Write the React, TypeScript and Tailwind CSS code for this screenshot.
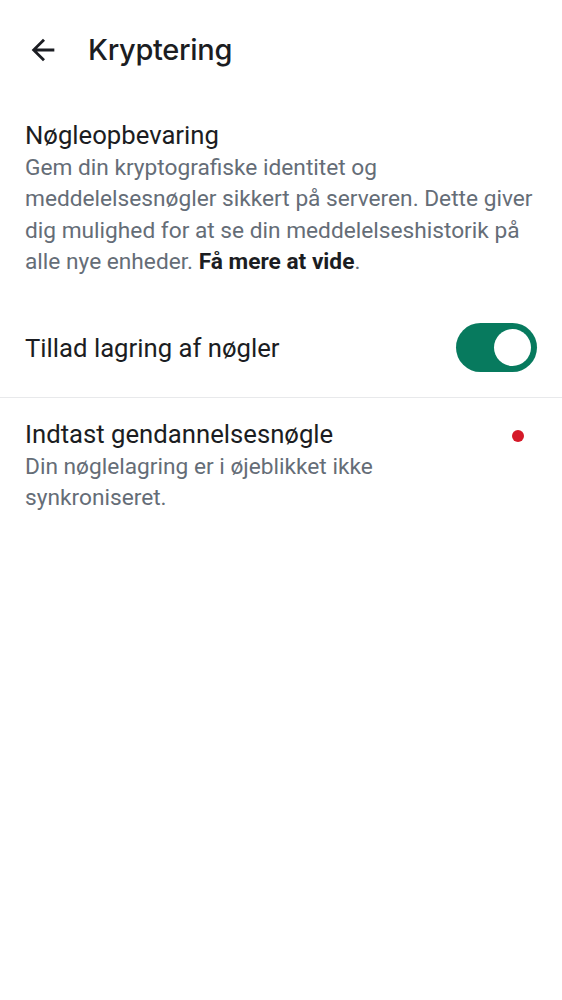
import React from 'react';

const ArrowBack = () => (
  <svg width="34" height="34" viewBox="0 0 24 24" fill="#1b1d22">
    <path d="M20 11H7.83l5.59-5.59L12 4l-8 8 8 8 1.41-1.41L7.83 13H20v-2z" />
  </svg>
);

const App = () => {
  return (
    <div className="w-full min-h-screen bg-white font-['Roboto',sans-serif] text-[#1b1d22]">
      {/* Top bar */}
      <div className="h-[100px] flex items-center pl-[26px]">
        <ArrowBack />
        <h1 className="ml-[28px] font-['Inter',sans-serif] font-medium text-[29px] tracking-[-0.3px]">
          Kryptering
        </h1>
      </div>

      {/* Key storage */}
      <div className="px-[25px] pt-[19px]">
        <p className="text-[25.7px] leading-[32px]">Nøgleopbevaring</p>
        <p className="mt-[1px] text-[22.7px] leading-[31.3px] text-[#656d77]">
          Gem din kryptografiske identitet og meddelelsesnøgler sikkert på serveren. Dette giver dig mulighed for at
          se din meddelelseshistorik på alle nye enheder.{' '}
          <span className="font-bold text-[#1b1d22]">Få mere at vide</span>.
        </p>
      </div>

      <div className="flex items-center justify-between px-[25px] pt-[46px] pb-[25px]">
        <p className="text-[25.7px] leading-[32px]">Tillad lagring af nøgler</p>
        <div className="w-[81px] h-[49px] rounded-full bg-[#077a5e] flex items-center justify-end pr-[6px]">
          <div className="w-[37px] h-[37px] rounded-full bg-white" />
        </div>
      </div>

      <div className="h-px bg-[#e8e9eb]" />

      {/* Recovery key */}
      <div className="flex items-start justify-between px-[25px] pt-[20px]">
        <div className="max-w-[440px]">
          <p className="text-[25.7px] leading-[32px]">Indtast gendannelsesnøgle</p>
          <p className="mt-[1px] text-[22.7px] leading-[31.3px] text-[#656d77]">
            Din nøglelagring er i øjeblikket ikke synkroniseret.
          </p>
        </div>
        <div className="mt-[12px] mr-[13px] w-[12px] h-[12px] rounded-full bg-[#d51928]" />
      </div>
    </div>
  );
};

export default App;
